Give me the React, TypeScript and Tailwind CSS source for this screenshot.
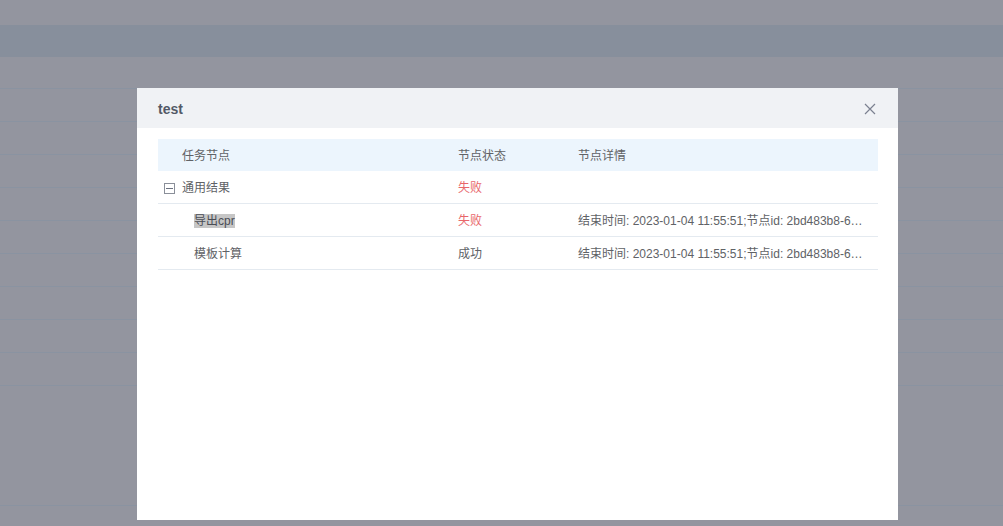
const ROWS = [
  { name: "通用结果", status: "失败", fail: true, detail: "", level: 0, toggle: true },
  {
    name: "导出cpr",
    status: "失败",
    fail: true,
    detail: "结束时间: 2023-01-04 11:55:51;节点id: 2bd483b8-6a1f-4c2e-9d0b-7f31c5a8e2d4",
    level: 1,
    selected: true,
  },
  {
    name: "模板计算",
    status: "成功",
    fail: false,
    detail: "结束时间: 2023-01-04 11:55:51;节点id: 2bd483b8-6a1f-4c2e-9d0b-7f31c5a8e2d4",
    level: 1,
  },
];

function CloseIcon() {
  return (
    <svg width="12" height="12" viewBox="0 0 12 12" fill="none">
      <path d="M1 1L11 11M11 1L1 11" stroke="#7b8190" strokeWidth="1.2" />
    </svg>
  );
}

function Toggle() {
  return (
    <span className="flex h-[11px] w-[11px] items-center justify-center border border-[#8a8f99]">
      <span className="h-px w-[7px] bg-[#6b7180]" />
    </span>
  );
}

export default function App() {
  return (
    <div
      className="relative h-[526px] w-full overflow-hidden bg-[#93959f] text-[12px] text-[#606266]"
      style={{ fontFamily: '"Liberation Sans", Arial, "Noto Sans CJK SC", sans-serif' }}
    >
      {/* dimmed page behind the dialog */}
      <div className="flex flex-col">
        <div className="h-[25px]" />
        <div className="h-[32px] bg-[#878f9c]" />
        <div className="h-[32px] border-b border-[#8a93a1]" />
        {Array.from({ length: 9 }).map((_, i) => (
          <div key={i} className="h-[33px] border-b border-[#8a93a1]" />
        ))}
        <div className="h-[120px] border-b border-[#8a93a1]" />
      </div>

      {/* dialog */}
      <div className="absolute left-[137px] top-[88px] flex h-[432px] w-[761px] flex-col bg-white">
        <div className="flex h-[40px] shrink-0 items-center justify-between bg-[#f0f2f5] pl-[21px] pr-[22px] pt-[2px]">
          <span className="text-[14px] font-bold text-[#535967]">test</span>
          <CloseIcon />
        </div>

        <div className="ml-[21px] mr-[20px] mt-[11px]">
          <div className="grid h-[32px] grid-cols-[288px_120px_312px] items-center bg-[#ecf5fd] pt-[2px]">
            <div className="pl-[24px]">任务节点</div>
            <div className="pl-[12px]">节点状态</div>
            <div className="pl-[12px]">节点详情</div>
          </div>
          {ROWS.map((r) => (
            <div
              key={r.name}
              className="grid h-[33px] grid-cols-[288px_120px_312px] items-center border-b border-[#e4eaf0] pt-[2px]"
            >
              <div className={r.level === 0 ? "flex items-center gap-[7px] pl-[6px]" : "pl-[36px]"}>
                {r.toggle && <Toggle />}
                <span className={r.selected ? "bg-[#c6c6c6] text-[#4a4d55]" : ""}>{r.name}</span>
              </div>
              <div className={r.fail ? "pl-[12px] text-[#e8666a]" : "pl-[12px]"}>{r.status}</div>
              <div className="truncate pl-[12px] pr-[12px]">{r.detail}</div>
            </div>
          ))}
        </div>
      </div>
    </div>
  );
}
